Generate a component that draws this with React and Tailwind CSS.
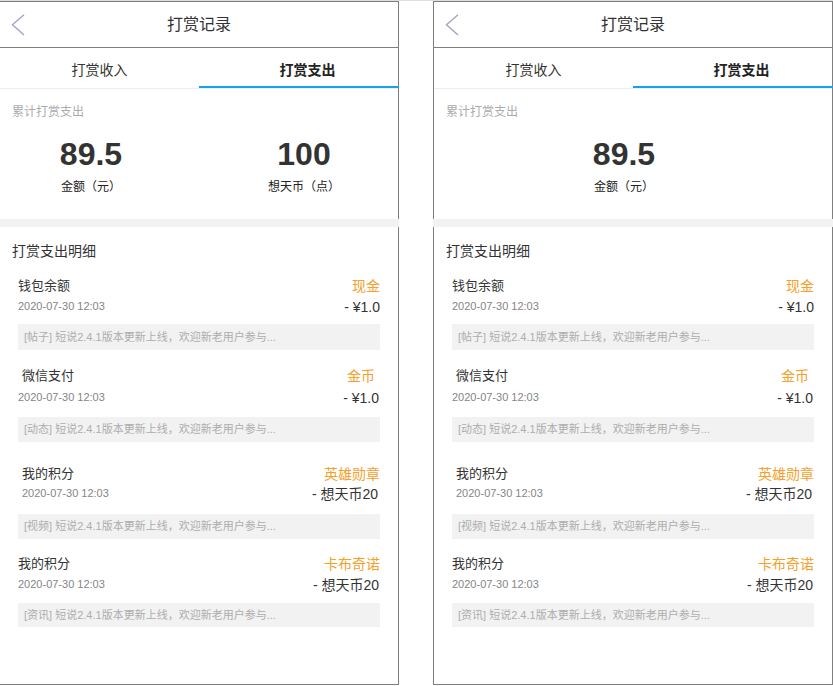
import React from "react";

const items = [
  {
    title: "钱包余额",
    label: "现金",
    amount: "- ¥1.0",
    tag: "帖子",
    row1: "mt-[15px]",
    titleCls: "pl-0",
    labelCls: "mr-0",
    row2: "mt-px",
    dateCls: "pl-0",
    amountCls: "mr-0",
    box: "mt-[7px] h-[26px]",
  },
  {
    title: "微信支付",
    label: "金币",
    amount: "- ¥1.0",
    tag: "动态",
    row1: "mt-[16px]",
    titleCls: "pl-[4px]",
    labelCls: "mr-[5px]",
    row2: "mt-[2px]",
    dateCls: "pl-0",
    amountCls: "mr-px",
    box: "mt-[9px] h-[25px]",
  },
  {
    title: "我的积分",
    label: "英雄勋章",
    amount: "- 想天币20",
    tag: "视频",
    row1: "mt-[22px]",
    titleCls: "pl-[4px]",
    labelCls: "mr-0",
    row2: "mt-0",
    dateCls: "pl-[4px]",
    amountCls: "mr-[2px]",
    box: "mt-[10px] h-[25px]",
  },
  {
    title: "我的积分",
    label: "卡布奇诺",
    amount: "- 想天币20",
    tag: "资讯",
    row1: "mt-[15px]",
    titleCls: "pl-0",
    labelCls: "mr-0",
    row2: "mt-px",
    dateCls: "pl-0",
    amountCls: "mr-px",
    box: "mt-[8px] h-[24px]",
  },
];

function Panel({ single }) {
  return (
    <div className="w-[400px] h-[684px] shrink-0 border border-[#7f7f7f] bg-white flex flex-col">
      {/* header */}
      <div className="relative h-[46px] shrink-0 border-b border-[#7f7f7f] flex items-center justify-center">
        <svg
          className="absolute left-[11px] top-[12px]"
          width="14"
          height="22"
          viewBox="0 0 14 22"
          fill="none"
        >
          <polyline
            points="13,0.8 1.5,10.8 13,21"
            stroke="#a7a2c6"
            strokeWidth="1.4"
            fill="none"
          />
        </svg>
        <span className="text-[16px] leading-[20px] text-[#333]">打赏记录</span>
      </div>
      {/* tabs */}
      <div className="h-[41px] shrink-0 border-b border-[#eeeeee] flex">
        <div className="w-[199px] h-[40px] flex items-center justify-center pt-[5px] text-[14px] text-[#333]">
          打赏收入
        </div>
        <div className="relative flex-1 h-[40px] flex items-center justify-center pt-[5px] pl-[18px] text-[14px] font-bold text-[#222]">
          打赏支出
          <div className="absolute left-0 -right-px bottom-0 h-[2px] bg-[#17a1e6]" />
        </div>
      </div>
      {/* summary */}
      <div className="h-[130px] shrink-0 pt-[15px]">
        <div className="pl-[12px] text-[12px] leading-[16px] text-[#ababab]">累计打赏支出</div>
        {single ? (
          <div className="flex mt-[18px]">
            <div className="ml-[100px] w-[180px] flex flex-col items-center">
              <div className="text-[32px] leading-none font-bold text-[#333]">89.5</div>
              <div className="mt-[9px] text-[12px] leading-[16px] text-[#222]">金额（元）</div>
            </div>
          </div>
        ) : (
          <div className="flex mt-[18px] gap-[33px]">
            <div className="ml-px w-[180px] flex flex-col items-center">
              <div className="text-[32px] leading-none font-bold text-[#333]">89.5</div>
              <div className="mt-[9px] text-[12px] leading-[16px] text-[#222]">金额（元）</div>
            </div>
            <div className="w-[180px] flex flex-col items-center">
              <div className="text-[32px] leading-none font-bold text-[#333]">100</div>
              <div className="mt-[9px] text-[12px] leading-[16px] text-[#222]">想天币（点）</div>
            </div>
          </div>
        )}
      </div>
      {/* band */}
      <div className="h-[8px] shrink-0 -mx-px bg-[#f2f2f2]" />
      {/* details */}
      <div className="flex-1 pt-[14px]">
        <div className="pl-[12px] text-[14px] leading-[20px] text-[#333]">打赏支出明细</div>
        <div className="px-[18px]">
          {items.map((it, i) => (
            <div key={i}>
              <div className={`${it.row1} h-[20px] flex items-center justify-between`}>
                <span className={`${it.titleCls} text-[13px] text-[#333]`}>{it.title}</span>
                <span className={`${it.labelCls} text-[14px] text-[#f5a02a]`}>{it.label}</span>
              </div>
              <div className={`${it.row2} h-[20px] flex items-center justify-between`}>
                <span className={`${it.dateCls} text-[11px] text-[#858585] pb-[2px]`}>
                  2020-07-30 12:03
                </span>
                <span className={`${it.amountCls} text-[14px] text-[#333]`}>{it.amount}</span>
              </div>
              <div
                className={`${it.box} bg-[#f2f2f2] flex items-center pl-[6px] text-[11px] text-[#adadad]`}
              >
                [{it.tag}] 短说2.4.1版本更新上线，欢迎新老用户参与...
              </div>
            </div>
          ))}
        </div>
      </div>
    </div>
  );
}

export default function App() {
  return (
    <div className="w-[833px] h-[686px] bg-white overflow-hidden font-['Liberation_Sans','Noto_Sans_CJK_SC',sans-serif]">
      <div className="h-px bg-[#dedede]" />
      <div className="flex gap-[34px] -ml-px">
        <Panel />
        <Panel single />
      </div>
    </div>
  );
}
